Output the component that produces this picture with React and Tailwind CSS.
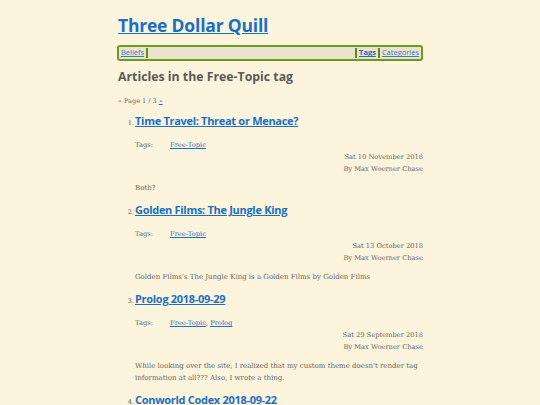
import React from "react";

const items = [
  { n: 1, title: "Time Travel: Threat or Menace?", tags: ["Free-Topic"], date: "Sat 10 November 2018", summary: ["Both?"] },
  { n: 2, title: "Golden Films: The Jungle King", tags: ["Free-Topic"], date: "Sat 13 October 2018", summary: ["Golden Films's The Jungle King is a Golden Films by Golden Films"] },
  { n: 3, title: "Prolog 2018-09-29", tags: ["Free-Topic", "Prolog"], date: "Sat 29 September 2018", summary: ["While looking over the site, I realized that my custom theme doesn't render tag", "information at all??? Also, I wrote a thing."] },
  { n: 4, title: "Conworld Codex 2018-09-22", tags: ["Free-Topic"], date: "Sat 22 September 2018", summary: ["..."] },
];

const sans = { fontFamily: '"Open Sans", "Noto Sans", sans-serif' };
const serif = { fontFamily: '"DejaVu Serif", "Liberation Serif", serif' };

export default function App() {
  return (
    <div className="h-[405px] w-[540px] bg-[#fcf4dc] overflow-hidden">
      <div className="w-[306px] ml-[117px] pt-[13px]">
        <h1 className="text-[17.5px] leading-[24px] font-bold text-[#1a6fc4] underline tracking-[-0.2px] pl-[1px]" style={sans}>
          Three Dollar Quill
        </h1>
        <div className="mt-[8px] h-[16px] border-2 border-[#6a9a1e] rounded-[3px] bg-[#ece3cd] flex items-center text-[7.5px] px-[2px]" style={sans}>
          <a className="text-[#3a7ec4] underline">Beliefs</a>
          <span className="ml-[2px] w-[2px] h-[10px] bg-[#5e8e16]" />
          <span className="flex-1" />
          <span className="w-[2px] h-[10px] bg-[#5e8e16] mr-[2px]" />
          <a className="text-[#2a6cb4] underline font-bold">Tags</a>
          <span className="mx-[2px] w-[2px] h-[10px] bg-[#5e8e16]" />
          <a className="text-[#3a7ec4] underline">Categories</a>
        </div>
        <h2 className="mt-[8px] text-[12.3px] leading-[16px] font-bold text-[#5a5a5a] pl-[1px]" style={sans}>
          Articles in the Free-Topic tag
        </h2>
        <div className="mt-[11px] text-[6.5px] leading-[10px] text-[#666] pl-[1px]" style={serif}>
          « Page 1 / 3 <a className="text-[#1a6fc4] underline">»</a>
        </div>
        <ol className="mt-[7px]">
          {items.map((it) => (
            <li key={it.n} className="flex mb-[8px]">
              <span className="w-[18px] text-right pr-[1px] text-[6.5px] leading-[16px] pt-[2px] text-[#555]" style={serif}>{it.n}.</span>
              <div className="flex-1">
                <a className="block text-[11px] leading-[16px] font-bold text-[#1a6fc4] underline tracking-[-0.3px]" style={sans}>{it.title}</a>
                <div className="mt-[10px] flex text-[6.7px] leading-[12px] text-[#666]" style={serif}>
                  <span className="w-[35px]">Tags:</span>
                  <span>
                    {it.tags.map((t, i) => (
                      <span key={t}>
                        {i > 0 && ", "}
                        <a className="text-[#1a6fc4] underline">{t}</a>
                      </span>
                    ))}
                  </span>
                </div>
                <div className="text-right text-[6.7px] leading-[12px] text-[#666]" style={serif}>
                  <div>{it.date}</div>
                  <div>By Max Woerner Chase</div>
                </div>
                <div className="mt-[7px] text-[7px] leading-[12px] text-[#666]" style={serif}>
                  {it.summary.map((s) => (
                    <div key={s}>{s}</div>
                  ))}
                </div>
              </div>
            </li>
          ))}
        </ol>
      </div>
    </div>
  );
}
